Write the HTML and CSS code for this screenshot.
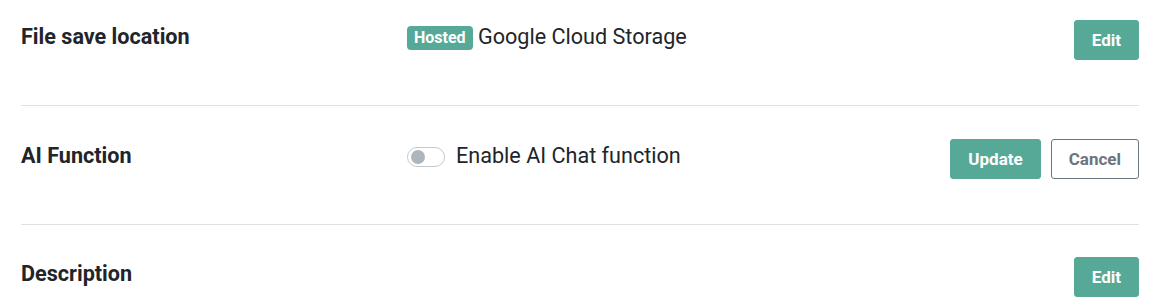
FILE: index.html
```html
<!DOCTYPE html>
<html lang="en">
<head>
<meta charset="utf-8">
<title>Settings</title>
<link rel="stylesheet" href="styles.css">
</head>
<body>
<div class="settings">
  <div class="row row-first">
    <div class="label">File save location</div>
    <div class="value"><span class="badge">Hosted</span> Google Cloud Storage</div>
    <div class="actions"><button class="btn btn-primary">Edit</button></div>
  </div>
  <div class="row">
    <div class="label">AI Function</div>
    <div class="value">
      <label class="switch-line"><span class="switch"><span class="knob"></span></span><span>Enable AI Chat function</span></label>
    </div>
    <div class="actions"><button class="btn btn-primary">Update</button><button class="btn btn-outline">Cancel</button></div>
  </div>
  <div class="row row-last">
    <div class="label">Description</div>
    <div class="value"></div>
    <div class="actions"><button class="btn btn-primary">Edit</button></div>
  </div>
</div>
</body>
</html>
```
FILE: styles.css
```css
html, body {
  margin: 0;
  padding: 0;
  background: #ffffff;
}
body {
  font-family: Roboto, "Liberation Sans", sans-serif;
  color: #212529;
  overflow: hidden;
}
.settings {
  padding: 0 11px 0 21px;
}
.row {
  display: grid;
  grid-template-columns: 386px 1fr auto;
  align-items: start;
  padding: 33px 0 45px;
  border-bottom: 1px solid #dee2e6;
}
.row-first {
  padding-top: 20px;
}
.row-last {
  padding-top: 32px;
  border-bottom: none;
}
.label {
  font-size: 21.6px;
  font-weight: 700;
  line-height: 33px;
}
.value {
  font-size: 21.6px;
  line-height: 33px;
}
.badge {
  display: inline-block;
  background: #56a997;
  color: #ffffff;
  font-size: 16px;
  font-weight: 700;
  line-height: 1;
  padding: 4px 7px;
  border-radius: 4px;
  vertical-align: 1px;
}
.switch-line {
  display: inline-flex;
  align-items: center;
  gap: 11px;
}
.switch {
  display: inline-flex;
  align-items: center;
  box-sizing: border-box;
  width: 38px;
  height: 20px;
  border: 1px solid #c4c9ce;
  border-radius: 10px;
  padding: 0 3px;
  margin-top: 3px;
}
.knob {
  width: 14px;
  height: 14px;
  border-radius: 50%;
  background: #adb5bd;
}
.actions {
  display: flex;
  gap: 10px;
  justify-content: flex-end;
}
.btn {
  font-family: Roboto, "Liberation Sans", sans-serif;
  font-size: 17px;
  font-weight: 700;
  height: 40px;
  padding: 0 17px;
  border-radius: 3px;
  cursor: pointer;
}
.btn-primary {
  background: #56a997;
  border: 1px solid #56a997;
  color: #ffffff;
}
.btn-outline {
  background: #ffffff;
  border: 1px solid #6c757d;
  color: #6c757d;
}
```
